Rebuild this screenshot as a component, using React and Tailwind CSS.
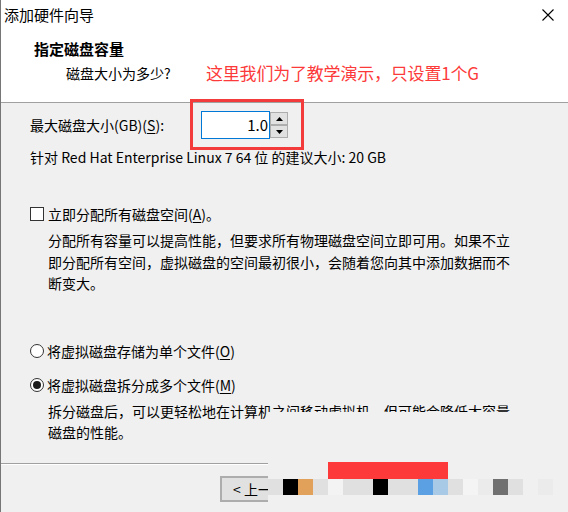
import React from 'react';

// mosaic watermark blocks along the bottom (x offset from 268, 15px each)
const mosaic = [
  '#e0e0e0', '#000000', '#e1a15b', '#e0e0e0', '#f3f3f3', '#e0e0e0', '#e0e0e0', '#000000',
  '#e0e0e0', '#e0e0e0', '#5aa0e2', '#a9cae6', '#e0e0e0', '#f4f4f4', '#ebebeb', '#707070',
  '#e0e0e0', '#f0f0f0', '#ebebeb', '#f0f0f0',
];

const Key = ({ k }) => (
  <>
    (<span className="underline underline-offset-2">{k}</span>)
  </>
);

const App = () => {
  return (
    <div className="relative w-[568px] h-[512px] overflow-hidden bg-[#f0f0f0] border-l border-[#767676] text-black font-['Noto_Sans_CJK_SC',sans-serif] text-[14px]">
      {/* Header */}
      <div className="bg-white h-[103px] border-b border-[#a0a0a0]">
        <div className="flex items-center justify-between h-[30px] pl-[3px] pr-[14px]">
          <span className="text-[15px] leading-[20px]">添加硬件向导</span>
          <svg width="12" height="12" viewBox="0 0 12 12" className="block">
            <path d="M0.5 0.5 L11.5 11.5 M11.5 0.5 L0.5 11.5" stroke="#000" strokeWidth="1.1" />
          </svg>
        </div>
        <div className="pl-[33px] mt-[9px] text-[15px] font-bold leading-[20px]">指定磁盘容量</div>
        <div className="flex items-center mt-[2px] h-[24px]">
          <span className="pl-[65px] w-[205px] leading-[20px]">磁盘大小为多少?</span>
          <span className="text-[17px] text-[#fc3a3a] leading-[24px] tracking-[-0.2px]">这里我们为了教学演示，只设置1个G</span>
        </div>
      </div>

      {/* Body */}
      <div className="pl-[29px]">
        <div className="flex items-center h-[28px] mt-[8px]">
          <span className="w-[171px] leading-[20px]">
            最大磁盘大小(GB)<Key k="S" />:
          </span>
          <div className="w-[69px] h-[28px] bg-white border border-[#0078d7] flex items-center justify-end pr-[1px] text-[15px]">
            1.0
          </div>
          <div className="flex flex-col gap-0 h-[26px]">
            <div className="w-[18px] h-[13px] bg-[#e1e1e1] border border-[#adadad] flex items-center justify-center">
              <svg width="7" height="4" viewBox="0 0 7 4"><path d="M3.5 0 L7 4 L0 4 Z" fill="#000" /></svg>
            </div>
            <div className="w-[18px] h-[13px] bg-[#e1e1e1] border border-[#adadad] flex items-center justify-center">
              <svg width="7" height="4" viewBox="0 0 7 4"><path d="M0 0 L7 0 L3.5 4 Z" fill="#000" /></svg>
            </div>
          </div>
        </div>

        <div className="mt-[8px] leading-[20px]">针对 Red Hat Enterprise Linux 7 64 位 的建议大小: 20 GB</div>

        <div className="mt-[37px] flex items-center h-[20px]">
          <div className="w-[14px] h-[14px] bg-white border border-[#333] mr-[4px]" />
          <span className="leading-[20px]">立即分配所有磁盘空间<Key k="A" />。</span>
        </div>

        <div className="mt-[6px] pl-[18px] leading-[21.5px] whitespace-nowrap">
          <div>分配所有容量可以提高性能，但要求所有物理磁盘空间立即可用。如果不立</div>
          <div>即分配所有空间，虚拟磁盘的空间最初很小，会随着您向其中添加数据而不</div>
          <div>断变大。</div>
        </div>

        <div className="mt-[46px] flex items-center h-[20px]">
          <div className="w-[14px] h-[14px] rounded-full bg-white border border-[#333] mr-[3px]" />
          <span className="leading-[20px]">将虚拟磁盘存储为单个文件<Key k="O" /></span>
        </div>

        <div className="mt-[14px] flex items-center h-[20px]">
          <div className="w-[14px] h-[14px] rounded-full bg-white border border-[#333] mr-[3px] flex items-center justify-center">
            <div className="w-[8px] h-[8px] rounded-full bg-[#1a1a1a]" />
          </div>
          <span className="leading-[20px]">将虚拟磁盘拆分成多个文件<Key k="M" /></span>
        </div>

        <div className="mt-[6px] pl-[18px] leading-[21px] whitespace-nowrap">
          <div>拆分磁盘后，可以更轻松地在计算机之间移动虚拟机，但可能会降低大容量</div>
          <div>磁盘的性能。</div>
        </div>
      </div>

      {/* Footer */}
      <div className="mt-[20px] border-t border-[#a0a0a0] border-b border-b-white h-0" />
      <div className="flex pl-[219px] mt-[11px]">
        <div className="w-[80px] h-[26px] bg-[#e1e1e1] border-2 border-[#adadad] flex items-center pl-[11px] leading-[20px] whitespace-nowrap">
          &lt; 上一步(B)
        </div>
      </div>

      {/* red annotation box around the size input */}
      <div className="absolute left-[189px] top-[99px] w-[114px] h-[51px] border-[3px] border-[#f43b3b]" />

      {/* watermark cover + mosaic */}
      <div className="absolute left-[267px] top-[412px] right-0 bottom-0 bg-[#f0f0f0]" />
      <div className="absolute left-[327px] top-[462px] w-[120px] h-[17px] bg-[#fd3939]" />
      <div className="absolute left-[267px] top-[479px] flex">
        {mosaic.map((c, i) => (
          <div key={i} className="w-[15px] h-[16px]" style={{ backgroundColor: c }} />
        ))}
      </div>
    </div>
  );
};

export default App;
